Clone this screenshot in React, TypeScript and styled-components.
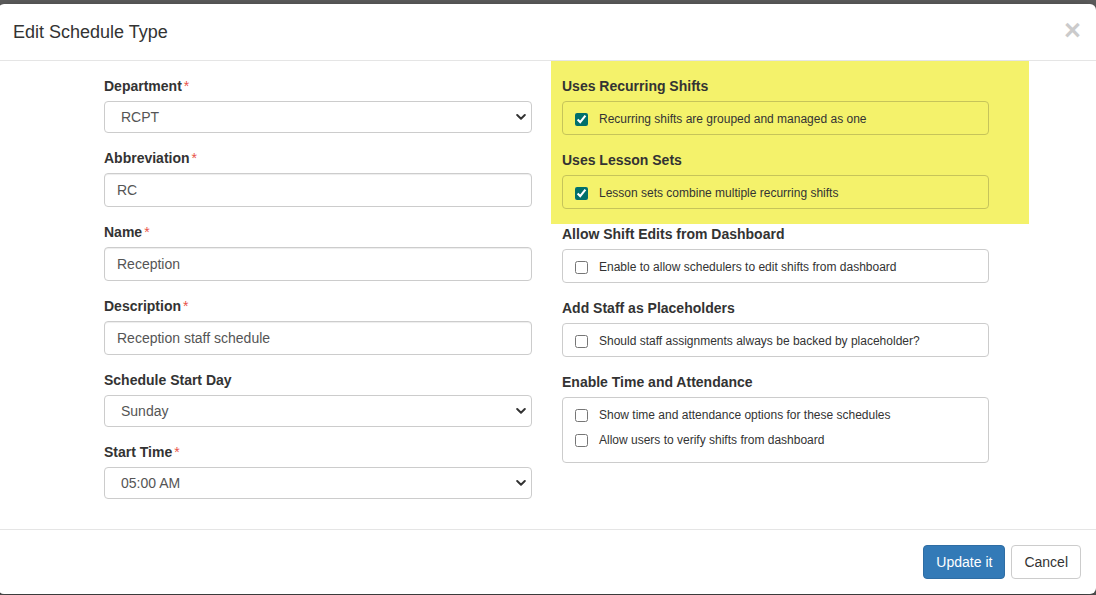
import React from "react";
import styled, { createGlobalStyle } from "styled-components";

const GlobalStyle = createGlobalStyle`
  html, body {
    margin: 0;
    padding: 0;
    background: #5e5e5e;
    height: 595px;
    overflow: hidden;
  }
  * { box-sizing: border-box; }
  body {
    font-family: "Liberation Sans", Arial, Helvetica, sans-serif;
    font-size: 14px;
    color: #333;
  }
`;

const Modal = styled.div`
  margin: 4px 0 0 -2px;
  width: 1098px;
  background: #fff;
  border-radius: 6px;
  box-shadow: 0 5px 15px rgba(0, 0, 0, 0.5);
`;

const Header = styled.div`
  display: flex;
  align-items: center;
  justify-content: space-between;
  padding: 15px;
  border-bottom: 1px solid #e5e5e5;
`;

const Title = styled.h4`
  margin: 0;
  font-size: 18px;
  line-height: 26px;
  font-weight: 400;
  color: #333;
`;

const Close = styled.button`
  border: 0;
  background: transparent;
  padding: 0;
  margin: -3px 0 0 0;
  font-family: "Liberation Sans", Arial, sans-serif;
  font-size: 29px;
  font-weight: 700;
  line-height: 1;
  color: #000;
  opacity: 0.2;
  cursor: pointer;
`;

const Body = styled.div`
  display: grid;
  grid-template-columns: 428px 427px;
  column-gap: 30px;
  padding: 15px 0 15px 106px;
`;

const Column = styled.div`
  display: flex;
  flex-direction: column;
`;

const Highlight = styled.div`
  display: flex;
  flex-direction: column;
  margin: -15px -40px 0 -11px;
  padding: 15px 40px 0 11px;
  background: #f4f26b;
`;

const Group = styled.div`
  margin-bottom: 15px;
`;

const Label = styled.label`
  display: block;
  font-weight: 700;
  font-size: 14px;
  line-height: 20px;
  margin-bottom: 5px;
  color: #333;
`;

const Req = styled.span`
  color: #e8534a;
  font-weight: 400;
  margin-left: 2px;
`;

const TextInput = styled.input`
  display: block;
  width: 100%;
  height: 34px;
  padding: 6px 12px;
  font-family: "Liberation Sans", Arial, sans-serif;
  font-size: 14px;
  color: #555;
  background: #fff;
  border: 1px solid #ccc;
  border-radius: 4px;
  box-shadow: inset 0 1px 1px rgba(0, 0, 0, 0.075);
  outline: none;
`;

const SelectWrap = styled.div`
  position: relative;
`;

const Select = styled.select`
  display: block;
  width: 100%;
  height: 32px;
  padding: 5px 24px 5px 16px;
  font-family: "Liberation Sans", Arial, sans-serif;
  font-size: 14px;
  color: #555;
  background: #fff;
  border: 1px solid #ccc;
  border-radius: 4px;
  appearance: none;
  -webkit-appearance: none;
  outline: none;
`;

const Chevron = styled.svg`
  position: absolute;
  right: 6px;
  top: 50%;
  transform: translateY(-50%);
  pointer-events: none;
`;

const CheckBox = styled.div<{ $border: string; $padBottom?: number }>`
  display: flex;
  flex-direction: column;
  border: 1px solid ${(p) => p.$border};
  border-radius: 4px;
  padding: 7px 12px ${(p) => p.$padBottom ?? 0}px;
`;

const CheckRow = styled.label`
  display: flex;
  align-items: center;
  height: 20px;
  margin-bottom: 5px;
  font-size: 12px;
  font-weight: 400;
  color: #333;
`;

const Check = styled.input<{ $accent?: string }>`
  width: 13px;
  height: 13px;
  margin: 0 11px 0 0;
  accent-color: ${(p) => p.$accent ?? "#0075ff"};
`;

const Footer = styled.div`
  display: flex;
  justify-content: flex-end;
  gap: 6px;
  padding: 15px;
  border-top: 1px solid #e5e5e5;
`;

const Button = styled.button<{ $primary?: boolean }>`
  height: 34px;
  padding: 6px 12px;
  font-family: "Liberation Sans", Arial, sans-serif;
  font-size: 14px;
  line-height: 20px;
  border-radius: 4px;
  border: 1px solid ${(p) => (p.$primary ? "#2e6da4" : "#ccc")};
  background: ${(p) => (p.$primary ? "#337ab7" : "#fff")};
  color: ${(p) => (p.$primary ? "#fff" : "#333")};
  cursor: pointer;
`;

const SelectField = ({ value }: { value: string }) => (
  <SelectWrap>
    <Select defaultValue={value}>
      <option value={value}>{value}</option>
    </Select>
    <Chevron width="10" height="7" viewBox="0 0 10 7">
      <polyline
        points="1.2,1.5 5,5.2 8.8,1.5"
        fill="none"
        stroke="#333"
        strokeWidth="2"
        strokeLinecap="round"
        strokeLinejoin="round"
      />
    </Chevron>
  </SelectWrap>
);

const YELLOW_BORDER = "#c6c45a";
const YELLOW_ACCENT = "#006f6b";

export default function App() {
  return (
    <>
      <GlobalStyle />
      <Modal>
        <Header>
          <Title>Edit Schedule Type</Title>
          <Close aria-label="Close">×</Close>
        </Header>
        <Body>
          <Column>
            <Group>
              <Label>
                Department<Req>*</Req>
              </Label>
              <SelectField value="RCPT" />
            </Group>
            <Group>
              <Label>
                Abbreviation<Req>*</Req>
              </Label>
              <TextInput defaultValue="RC" />
            </Group>
            <Group>
              <Label>
                Name<Req>*</Req>
              </Label>
              <TextInput defaultValue="Reception" />
            </Group>
            <Group>
              <Label>
                Description<Req>*</Req>
              </Label>
              <TextInput defaultValue="Reception staff schedule" />
            </Group>
            <Group>
              <Label>Schedule Start Day</Label>
              <SelectField value="Sunday" />
            </Group>
            <Group>
              <Label>
                Start Time<Req>*</Req>
              </Label>
              <SelectField value="05:00 AM" />
            </Group>
          </Column>
          <Column>
            <Highlight>
              <Group>
                <Label>Uses Recurring Shifts</Label>
                <CheckBox $border={YELLOW_BORDER}>
                  <CheckRow>
                    <Check type="checkbox" defaultChecked $accent={YELLOW_ACCENT} />
                    Recurring shifts are grouped and managed as one
                  </CheckRow>
                </CheckBox>
              </Group>
              <Group>
                <Label>Uses Lesson Sets</Label>
                <CheckBox $border={YELLOW_BORDER}>
                  <CheckRow>
                    <Check type="checkbox" defaultChecked $accent={YELLOW_ACCENT} />
                    Lesson sets combine multiple recurring shifts
                  </CheckRow>
                </CheckBox>
              </Group>
            </Highlight>
            <Group>
              <Label>Allow Shift Edits from Dashboard</Label>
              <CheckBox $border="#ccc">
                <CheckRow>
                  <Check type="checkbox" />
                  Enable to allow schedulers to edit shifts from dashboard
                </CheckRow>
              </CheckBox>
            </Group>
            <Group>
              <Label>Add Staff as Placeholders</Label>
              <CheckBox $border="#ccc">
                <CheckRow>
                  <Check type="checkbox" />
                  Should staff assignments always be backed by placeholder?
                </CheckRow>
              </CheckBox>
            </Group>
            <Group>
              <Label>Enable Time and Attendance</Label>
              <CheckBox $border="#ccc" $padBottom={7}>
                <CheckRow>
                  <Check type="checkbox" />
                  Show time and attendance options for these schedules
                </CheckRow>
                <CheckRow>
                  <Check type="checkbox" />
                  Allow users to verify shifts from dashboard
                </CheckRow>
              </CheckBox>
            </Group>
          </Column>
        </Body>
        <Footer>
          <Button $primary>Update it</Button>
          <Button>Cancel</Button>
        </Footer>
      </Modal>
    </>
  );
}
